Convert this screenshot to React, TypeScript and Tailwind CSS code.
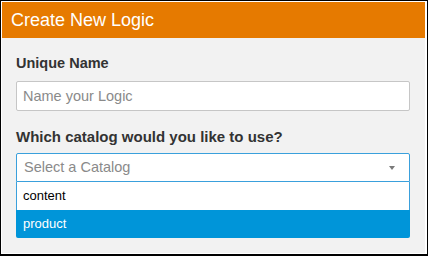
import React from 'react';

export default function App() {
  return (
    <div className="w-[428px] h-[256px] bg-black pt-[1px] pl-[1px] pr-[1px] pb-[2px] font-['Liberation_Sans',Arial,sans-serif]">
      <div className="flex h-full flex-col bg-white pt-[1px] pl-[1px] pr-[2px] pb-[1px]">
        <div className="flex h-full flex-col bg-[#f2f2f2]">
          <div className="flex h-[36px] items-center bg-[#e67a00] pl-[9px]">
            <h1 className="text-[18px] text-white">Create New Logic</h1>
          </div>
          <div className="flex flex-col pl-[14px] pr-[15px] pt-[15px]">
            <label className="text-[14.5px] font-bold leading-5 text-[#333]">Unique Name</label>
            <input
              className="mt-[8px] h-[30px] rounded-[2px] border border-[#c6c6c6] bg-white px-[6px] text-[14.5px] text-[#333] placeholder:text-[#8a8a8a] outline-none"
              placeholder="Name your Logic"
            />
            <label className="mt-[16px] text-[15px] font-bold leading-5 text-[#333]">
              Which catalog would you like to use?
            </label>
            <div className="mt-[6px] flex flex-col">
              <div className="flex h-[29px] items-center justify-between rounded-t-[2px] border border-[#3aa0dc] bg-white pl-[7px] pr-[14px]">
                <span className="text-[14.5px] text-[#8a8a8a]">Select a Catalog</span>
                <svg width="6" height="4" viewBox="0 0 6 4">
                  <path d="M0 0 L6 0 L3 4 Z" fill="#7a7a7a" />
                </svg>
              </div>
              <div className="flex h-[28px] items-center border-x border-[#3aa0dc] bg-white pl-[6px] text-[13px] text-black">
                content
              </div>
              <div className="flex h-[28px] items-center rounded-b-[2px] bg-[#0095d9] pl-[7px] text-[13px] text-white">
                product
              </div>
            </div>
          </div>
        </div>
      </div>
    </div>
  );
}
